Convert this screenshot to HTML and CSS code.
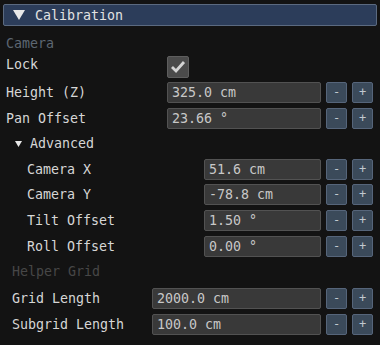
FILE: index.html
```html
<html>
<head>
   <link rel="stylesheet" href="styles.css">
</head>
<body>
<div id='panel'>
<div class='header'>
<svg class='tri-big' width='12' height='10' viewBox='0 0 12 10'><polygon points='0,0 12,0 6,10' fill='#e8e8e8'/></svg>
<span>Calibration</span>
</div>

<div class='group-label cam-label'>Camera</div>

<div class='row lock-row'>
<span class='label w-main lock-label'>Lock</span>
<div class='check'>
<svg width='16' height='14' viewBox='0 0 16 14'><polyline points='2,7 6,11 14,2' fill='none' stroke='#d4d4d4' stroke-width='2.8'/></svg>
</div>
</div>

<div class='row r-height'>
<span class='label w-main'>Height (Z)</span>
<div class='field'>325.0 cm</div>
<div class='btn'>-</div>
<div class='btn'>+</div>
</div>

<div class='row r-pan'>
<span class='label w-main'>Pan Offset</span>
<div class='field'>23.66 °</div>
<div class='btn'>-</div>
<div class='btn'>+</div>
</div>

<div class='tree'>
<svg class='tri-small' width='7' height='6' viewBox='0 0 7 6'><polygon points='0,0 7,0 3.5,6' fill='#e8e8e8'/></svg>
<span>Advanced</span>
</div>

<div class='inner'>
<div class='row r-camx'>
<span class='label w-inner'>Camera X</span>
<div class='field'>51.6 cm</div>
<div class='btn'>-</div>
<div class='btn'>+</div>
</div>
<div class='row r-camy'>
<span class='label w-inner'>Camera Y</span>
<div class='field'>-78.8 cm</div>
<div class='btn'>-</div>
<div class='btn'>+</div>
</div>
<div class='row r-tilt'>
<span class='label w-inner'>Tilt Offset</span>
<div class='field'>1.50 °</div>
<div class='btn'>-</div>
<div class='btn'>+</div>
</div>
<div class='row r-roll'>
<span class='label w-inner'>Roll Offset</span>
<div class='field'>0.00 °</div>
<div class='btn'>-</div>
<div class='btn'>+</div>
</div>
</div>

<div class='grid-sec'>
<div class='group-label grid-label'>Helper Grid</div>
<div class='row r-grid'>
<span class='label w-grid'>Grid Length</span>
<div class='field'>2000.0 cm</div>
<div class='btn'>-</div>
<div class='btn'>+</div>
</div>
<div class='row r-sub'>
<span class='label w-grid'>Subgrid Length</span>
<div class='field'>100.0 cm</div>
<div class='btn'>-</div>
<div class='btn'>+</div>
</div>
</div>
</div>
</body>
</html>
```

FILE: styles.css
```css
  * {
     box-sizing: border-box;
  }
  body {
     margin: 0;
     background: #131313;
     font: 13.3px "DejaVu Sans Mono", monospace;
     color: #d6d6d6;
  }

  #panel {
     padding: 4px 3px 0 3px;
  }

  .header {
     height: 22px;
     display: flex;
     align-items: center;
     padding-left: 9px;
     background: #2c3d5a;
     border: 1px solid #5b6a80;
     border-radius: 2px;
     color: #e2e2e2;
  }
  .tri-big {
     margin-right: 10px;
  }

  .group-label {
     height: 17px;
     line-height: 17px;
  }
  .cam-label {
     margin: 9px 0 0 3px;
     color: #5d6772;
  }

  .row {
     display: flex;
     align-items: center;
     height: 21px;
     margin-top: 5px;
  }
  .label {
     flex: none;
  }
  .w-main {
     width: 164px;
     padding-left: 3px;
  }
  .lock-row {
     height: 22px;
     margin-top: 4px;
  }
  .lock-label {
     margin-top: -5px;
  }
  .r-height {
     margin-top: 4px;
  }

  .check {
     width: 22px;
     height: 22px;
     background: #4b4b4b;
     border: 1px solid #5e5e5e;
     border-radius: 2px;
     display: flex;
     align-items: center;
     justify-content: center;
  }

  .field {
     width: 154px;
     height: 21px;
     line-height: 19px;
     padding-left: 4px;
     background: #393939;
     border: 1px solid #525252;
     border-radius: 2px;
     color: #c8c8c8;
  }
  .btn {
     width: 21px;
     height: 21px;
     margin-left: 5px;
     line-height: 19px;
     text-align: center;
     background: #3b4a5a;
     border: 1px solid #56657a;
     border-radius: 2px;
     color: #c0c8d0;
     font-size: 12px;
  }

  .tree {
     display: flex;
     align-items: center;
     height: 17px;
     margin-top: 6px;
     padding-left: 12px;
  }
  .tri-small {
     margin-right: 8px;
  }

  .inner .w-inner {
     width: 201px;
     padding-left: 24px;
  }
  .inner .field {
     width: 117px;
  }
  .r-camx {
     margin-top: 7px;
  }
  .r-camy {
     margin-top: 4px;
  }

  .grid-sec .w-grid {
     width: 149px;
     padding-left: 9px;
  }
  .grid-sec .field {
     width: 169px;
  }
  .grid-label {
     margin: 6px 0 0 9px;
     color: #474747;
  }
  .r-grid {
     margin-top: 8px;
  }
```
